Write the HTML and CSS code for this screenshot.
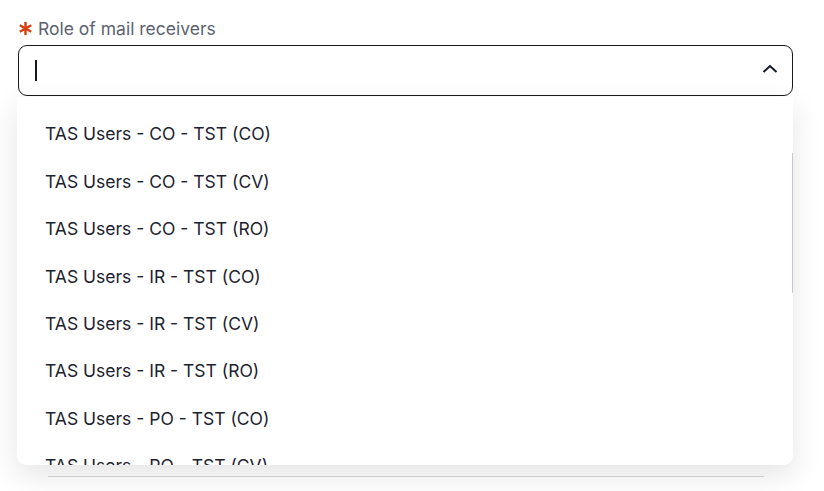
FILE: index.html
```html
<!DOCTYPE html>
<html lang="en">

<head>
    <meta charset="UTF-8">
    <meta name="viewport" content="width=device-width, initial-scale=1.0">
    <title>Mail receivers</title>
    <link rel="stylesheet" href="styles.css">
</head>

<body>
    <div class="field">
        <label class="field-label">
            <svg class="required" width="15" height="15" viewBox="0 0 16 16">
                <g stroke="#d4400f" stroke-width="2.6" stroke-linecap="butt">
                    <path d="M8 1 V15" />
                    <path d="M1.9 4.5 L14.1 11.5" />
                    <path d="M1.9 11.5 L14.1 4.5" />
                </g>
            </svg>
            Role of mail receivers
        </label>
        <div class="select">
            <span class="caret"></span>
            <svg class="chevron" width="16" height="10" viewBox="0 0 16 10">
                <path d="M1.5 8 L8 2 L14.5 8" fill="none" stroke="#111827" stroke-width="2" />
            </svg>
        </div>
        <div class="under-line"></div>

        <!-- options list -->
        <div class="menu">
            <div class="option">TAS Users - CO - TST (CO)</div>
            <div class="option">TAS Users - CO - TST (CV)</div>
            <div class="option">TAS Users - CO - TST (RO)</div>
            <div class="option">TAS Users - IR - TST (CO)</div>
            <div class="option">TAS Users - IR - TST (CV)</div>
            <div class="option">TAS Users - IR - TST (RO)</div>
            <div class="option">TAS Users - PO - TST (CO)</div>
            <div class="option">TAS Users - PO - TST (CV)</div>
            <span class="scroll-thumb"></span>
        </div>
    </div>
</body>

</html>
```

FILE: styles.css
```css
body {
    font-family: Inter, "Noto Sans", Arial, sans-serif;
    margin: 0;
    padding: 0;
    background-color: #ffffff;
    height: 491px;
    overflow: hidden;
}

.field {
    position: relative;
    padding: 16px 31px 0 18px;
}

.field-label {
    display: flex;
    align-items: center;
    font-size: 17.5px;
    color: #5b6272;
    height: 24px;
}

.required {
    margin-right: 5px;
    margin-top: 1px;
}

.select {
    box-sizing: border-box;
    margin-top: 5px;
    height: 51px;
    border: 1.5px solid #1a1a1a;
    border-radius: 9px;
    display: flex;
    align-items: center;
    justify-content: space-between;
    padding: 0 14px 0 16px;
}

.caret {
    display: block;
    width: 2px;
    height: 21px;
    background-color: #111827;
}

.chevron {
    margin-top: -4px;
}

.under-line {
    margin: 380px 29px 0 30px;
    height: 1px;
    background-color: #d8d8dc;
}

.menu {
    position: absolute;
    top: 97px;
    left: 17px;
    width: 776px;
    height: 368px;
    overflow: hidden;
    background-color: #ffffff;
    border-radius: 0 0 9px 9px;
    box-shadow: 0 10px 30px rgba(0, 0, 0, 0.11);
    padding-top: 13px;
    box-sizing: border-box;
}

.option {
    box-sizing: border-box;
    height: 47.45px;
    display: flex;
    align-items: center;
    padding-left: 28px;
    font-size: 17.5px;
    color: #1c2230;
}

.scroll-thumb {
    position: absolute;
    right: 0;
    top: 56px;
    width: 1.5px;
    height: 140px;
    background-color: #c7c5d3;
}
```
